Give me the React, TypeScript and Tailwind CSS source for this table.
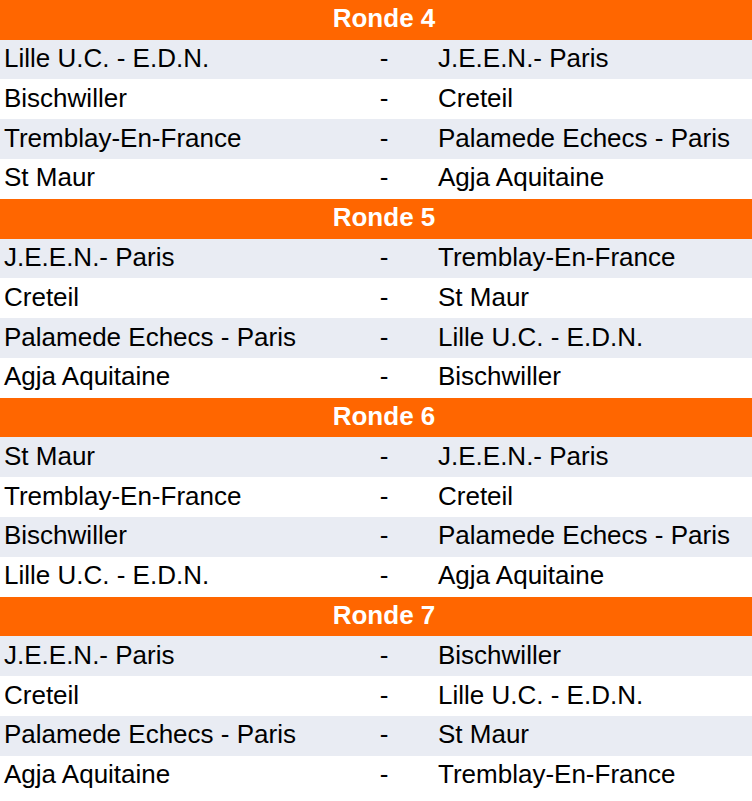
const rounds = [
  {
    name: "Ronde 4",
    games: [
      ["Lille U.C. - E.D.N.", "J.E.E.N.- Paris"],
      ["Bischwiller", "Creteil"],
      ["Tremblay-En-France", "Palamede Echecs - Paris"],
      ["St Maur", "Agja Aquitaine"],
    ],
  },
  {
    name: "Ronde 5",
    games: [
      ["J.E.E.N.- Paris", "Tremblay-En-France"],
      ["Creteil", "St Maur"],
      ["Palamede Echecs - Paris", "Lille U.C. - E.D.N."],
      ["Agja Aquitaine", "Bischwiller"],
    ],
  },
  {
    name: "Ronde 6",
    games: [
      ["St Maur", "J.E.E.N.- Paris"],
      ["Tremblay-En-France", "Creteil"],
      ["Bischwiller", "Palamede Echecs - Paris"],
      ["Lille U.C. - E.D.N.", "Agja Aquitaine"],
    ],
  },
  {
    name: "Ronde 7",
    games: [
      ["J.E.E.N.- Paris", "Bischwiller"],
      ["Creteil", "Lille U.C. - E.D.N."],
      ["Palamede Echecs - Paris", "St Maur"],
      ["Agja Aquitaine", "Tremblay-En-France"],
    ],
  },
];

export default function App() {
  return (
    <div className="w-[752px] bg-white text-black text-[26px] font-['Liberation_Sans',Arial,sans-serif] overflow-hidden">
      {rounds.map((r) => (
        <div key={r.name}>
          <div className="h-[39.7px] bg-[#ff6600] pl-4 flex items-center justify-center text-white font-bold pb-0.5">
            {r.name}
          </div>
          {r.games.map(([home, away], i) => (
            <div
              key={i}
              className={`h-[39.8px] flex items-center pb-0.5 ${i % 2 === 0 ? "bg-[#e9ecf3]" : "bg-white"}`}
            >
              <div className="w-[376px] pl-1 whitespace-nowrap">{home}</div>
              <div className="w-4 text-center">-</div>
              <div className="pl-[46px] whitespace-nowrap">{away}</div>
            </div>
          ))}
        </div>
      ))}
    </div>
  );
}
